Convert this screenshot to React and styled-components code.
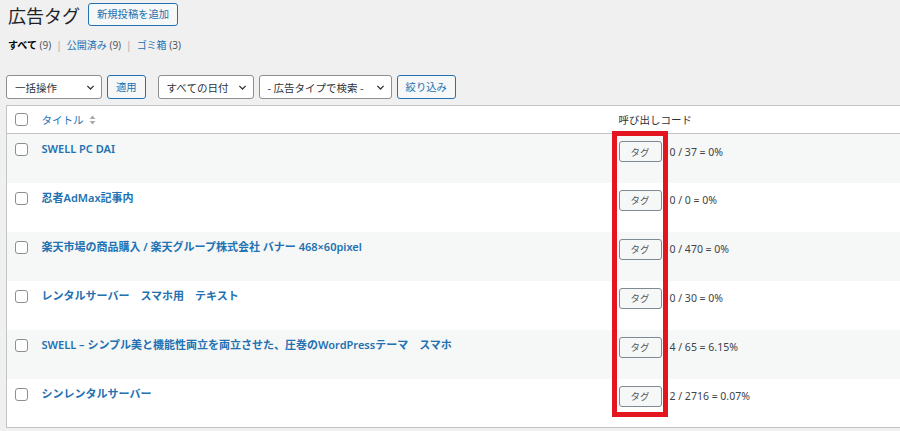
import styled, { createGlobalStyle } from 'styled-components';

const GlobalStyle = createGlobalStyle`
  html, body {
    margin: 0;
    padding: 0;
    background: #f0f0f1;
    overflow: hidden;
  }
  body {
    font-family: "Noto Sans", "Noto Sans CJK JP", sans-serif;
    color: #3c434a;
  }
`;

const rows = [
  { title: 'SWELL PC DAI', stats: '0 / 37 = 0%' },
  { title: '忍者AdMax記事内', stats: '0 / 0 = 0%' },
  { title: '楽天市場の商品購入 / 楽天グループ株式会社 バナー 468×60pixel', stats: '0 / 470 = 0%' },
  { title: 'レンタルサーバー　スマホ用　テキスト', stats: '0 / 30 = 0%' },
  { title: 'SWELL – シンプル美と機能性両立を両立させた、圧巻のWordPressテーマ　スマホ', stats: '4 / 65 = 6.15%' },
  { title: 'シンレンタルサーバー', stats: '2 / 2716 = 0.07%' },
];

const Chevron = () => (
  <svg width="9" height="9" viewBox="0 0 10 10" aria-hidden="true">
    <path d="M1.5 3.2 L5 6.7 L8.5 3.2" fill="none" stroke="#2c3338" strokeWidth="1.4" />
  </svg>
);

const SortIcon = () => (
  <svg width="7" height="10" viewBox="0 0 7 10" aria-hidden="true">
    <path d="M3.5 0.5 L6.5 4 H0.5 Z" fill="#a7aaad" />
    <path d="M3.5 9.5 L6.5 6 H0.5 Z" fill="#a7aaad" />
  </svg>
);

export default function App() {
  return (
    <>
      <GlobalStyle />
      <Wrap>
        <HeadingRow>
          <Heading>広告タグ</Heading>
          <OutlineButton>新規投稿を追加</OutlineButton>
        </HeadingRow>

        <StatusLinks>
          <Current>すべて</Current> <Count>(9)</Count>
          <Sep>|</Sep>
          <StatusLink>公開済み</StatusLink> <Count>(9)</Count>
          <Sep>|</Sep>
          <StatusLink>ゴミ箱</StatusLink> <Count>(3)</Count>
        </StatusLinks>

        <Filters>
          <Select $width={96}>
            <span>一括操作</span>
            <Chevron />
          </Select>
          <OutlineButton $small>適用</OutlineButton>
          <FilterGroup>
            <Select $width={96}>
              <span>すべての日付</span>
              <Chevron />
            </Select>
            <Select $width={133}>
              <span>- 広告タイプで検索 -</span>
              <Chevron />
            </Select>
            <OutlineButton $small>絞り込み</OutlineButton>
          </FilterGroup>
        </Filters>

        <TableArea>
          <Table>
            <thead>
              <tr>
                <CheckHead>
                  <Checkbox />
                </CheckHead>
                <HeadCell $width={577}>
                  <SortLabel>
                    タイトル <SortIcon />
                  </SortLabel>
                </HeadCell>
                <HeadCell>呼び出しコード</HeadCell>
              </tr>
            </thead>
            <tbody>
              {rows.map((row, i) => (
                <Row key={row.title} $alt={i % 2 === 0}>
                  <CheckCell>
                    <Checkbox />
                  </CheckCell>
                  <TitleCell>{row.title}</TitleCell>
                  <CodeCell>
                    <CodeLine>
                      <TagButton>タグ</TagButton>
                      <Stats>{row.stats}</Stats>
                    </CodeLine>
                  </CodeCell>
                </Row>
              ))}
            </tbody>
          </Table>
          <Highlight />
        </TableArea>
      </Wrap>
    </>
  );
}

const Wrap = styled.div`
  padding: 0 0 0 6px;
`;

const HeadingRow = styled.div`
  display: flex;
  align-items: center;
  gap: 8px;
  height: 29px;
  padding-left: 2px;
`;

const Heading = styled.h1`
  margin: 0;
  font-family: "Noto Sans CJK JP", sans-serif;
  font-size: 18px;
  font-weight: 400;
  line-height: 28px;
  color: #1d2327;
`;

const OutlineButton = styled.button`
  box-sizing: border-box;
  height: ${p => (p.$small ? '24px' : '23px')};
  padding: 0 ${p => (p.$small ? '8px' : '8px')};
  border: 1px solid #2271b1;
  border-radius: 3px;
  background: #f6f7f7;
  color: #2271b1;
  font-family: "Noto Sans CJK JP", sans-serif;
  font-size: 10.3px;
  line-height: 1;
  cursor: pointer;
`;

const StatusLinks = styled.div`
  margin-top: 8px;
  padding-left: 2px;
  height: 16px;
  line-height: 16px;
  font-size: 10px;
  white-space: pre;
`;

const Current = styled.span`
  font-family: "Noto Sans CJK JP", sans-serif;
  font-weight: 700;
  color: #000;
`;

const StatusLink = styled.span`
  font-family: "Noto Sans CJK JP", sans-serif;
  color: #2271b1;
`;

const Count = styled.span`
  color: #50575e;
`;

const Sep = styled.span`
  color: #a7aaad;
  padding: 0 5px;
`;

const Filters = styled.div`
  display: flex;
  align-items: center;
  gap: 5px;
  margin-top: 22px;
`;

const FilterGroup = styled.div`
  display: flex;
  align-items: center;
  gap: 5px;
  margin-left: 7px;
`;

const Select = styled.div`
  box-sizing: border-box;
  width: ${p => p.$width}px;
  height: 24px;
  display: flex;
  align-items: center;
  justify-content: space-between;
  padding: 0 6px 0 8px;
  border: 1px solid #8c8f94;
  border-radius: 3px;
  background: #fff;
  color: #2c3338;
  font-family: "Noto Sans CJK JP", sans-serif;
  font-size: 10.5px;
  white-space: nowrap;
`;

const TableArea = styled.div`
  position: relative;
  margin-top: 6px;
`;

const Table = styled.table`
  width: 1000px;
  border-collapse: collapse;
  border: 1px solid #c3c4c7;
  background: #fff;
  table-layout: fixed;
`;

const CheckHead = styled.th`
  box-sizing: border-box;
  width: 29px;
  height: 28px;
  padding: 0 0 0 8px;
  text-align: left;
  border-bottom: 1px solid #c3c4c7;
  vertical-align: middle;
`;

const HeadCell = styled.th`
  box-sizing: border-box;
  ${p => (p.$width ? `width: ${p.$width}px;` : '')}
  padding: 0 6px;
  text-align: left;
  font-family: "Noto Sans CJK JP", sans-serif;
  font-size: 10.5px;
  font-weight: 400;
  color: #2c3338;
  border-bottom: 1px solid #c3c4c7;
  vertical-align: middle;
`;

const SortLabel = styled.span`
  display: inline-flex;
  align-items: center;
  gap: 3px;
  color: #2271b1;

  svg {
    margin-left: 2px;
  }
`;

const Row = styled.tr`
  background: ${p => (p.$alt ? '#f6f7f7' : '#fff')};
  height: 49px;
`;

const CheckCell = styled.td`
  padding: 9px 0 0 8px;
  vertical-align: top;
`;

const Checkbox = styled.span`
  display: block;
  box-sizing: border-box;
  width: 13px;
  height: 13px;
  border: 1px solid #8c8f94;
  border-radius: 3px;
  background: #fff;
`;

const TitleCell = styled.td`
  padding: 7px 6px 0;
  vertical-align: top;
  font-family: "Noto Sans", "Noto Sans CJK JP", sans-serif;
  font-size: 11px;
  font-weight: 600;
  line-height: 16px;
  color: #2271b1;
  white-space: nowrap;
  overflow: hidden;
`;

const CodeCell = styled.td`
  padding: 7px 6px 0;
  vertical-align: top;
`;

const CodeLine = styled.div`
  display: flex;
  align-items: center;
  gap: 8px;
`;

const TagButton = styled.button`
  box-sizing: border-box;
  width: 43px;
  height: 21px;
  padding: 0;
  border: 1px solid #7e8993;
  border-radius: 3px;
  background: #f6f7f7;
  color: #50575e;
  font-family: "Noto Sans CJK JP", sans-serif;
  font-size: 9.5px;
  cursor: pointer;
`;

const Stats = styled.span`
  font-size: 10.5px;
  color: #3c434a;
  white-space: nowrap;
`;

const Highlight = styled.div`
  position: absolute;
  left: 606px;
  top: 26px;
  width: 56px;
  height: 286px;
  box-sizing: border-box;
  border: 5px solid #e3151f;
  pointer-events: none;
`;
